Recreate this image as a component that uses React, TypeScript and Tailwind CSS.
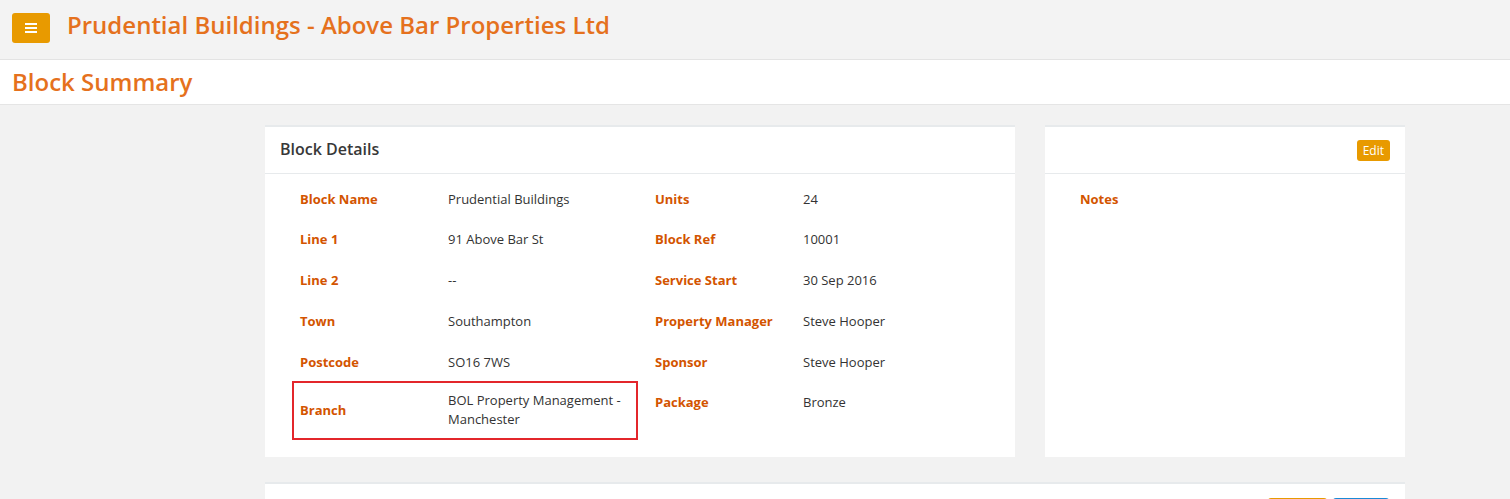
const font = { fontFamily: '"Open Sans", "Liberation Sans", sans-serif' };

interface Field {
  label: string;
  value: string[];
  highlight?: boolean;
}

const leftFields: Field[] = [
  { label: "Block Name", value: ["Prudential Buildings"] },
  { label: "Line 1", value: ["91 Above Bar St"] },
  { label: "Line 2", value: ["--"] },
  { label: "Town", value: ["Southampton"] },
  { label: "Postcode", value: ["SO16 7WS"] },
  { label: "Branch", value: ["BOL Property Management -", "Manchester"], highlight: true },
];

const rightFields: Field[] = [
  { label: "Units", value: ["24"] },
  { label: "Block Ref", value: ["10001"] },
  { label: "Service Start", value: ["30 Sep 2016"] },
  { label: "Property Manager", value: ["Steve Hooper"] },
  { label: "Sponsor", value: ["Steve Hooper"] },
  { label: "Package", value: ["Bronze"] },
];

const FieldRow = ({ field }: { field: Field }) => {
  if (field.highlight) {
    return (
      <div className="-ml-[8px] -mt-[2px] flex w-[346px] items-center border-2 border-[#e3262b] py-[8px] pl-[6px]">
        <div className="w-[148px] shrink-0 font-bold text-[#d35400]">{field.label}</div>
        <div className="text-[#333]">
          {field.value.map((v) => (
            <div key={v}>{v}</div>
          ))}
        </div>
      </div>
    );
  }
  return (
    <div className="flex h-[40.75px] items-center">
      <div className="w-[148px] shrink-0 font-bold text-[#d35400]">{field.label}</div>
      <div className="text-[#333]">{field.value.join(" ")}</div>
    </div>
  );
};

export default function App() {
  return (
    <div style={font} className="min-h-[499px] bg-[#f2f2f2] text-[13px] leading-[19.5px]">
      {/* top bar */}
      <div className="flex h-[60px] items-start border-b border-[#e3e3e3] bg-[#f3f3f3] pl-[12px] pt-[13px]">
        <button
          type="button"
          className="flex h-[30px] w-[38px] items-center justify-center rounded-[3px] bg-[#e89a00]"
          aria-label="Menu"
        >
          <span className="flex flex-col gap-[2px]">
            <span className="block h-[2px] w-[12px] bg-white" />
            <span className="block h-[2px] w-[12px] bg-white" />
            <span className="block h-[2px] w-[12px] bg-white" />
          </span>
        </button>
        <h1 className="ml-[17px] -mt-[3px] text-[24px] font-semibold leading-[30px] text-[#e5711d]">
          Prudential Buildings - Above Bar Properties Ltd
        </h1>
      </div>

      {/* page heading */}
      <div className="flex h-[45px] items-center border-b border-[#e5e5e5] bg-white pl-[12px]">
        <h2 className="text-[24px] font-semibold leading-[30px] text-[#e5711d]">Block Summary</h2>
      </div>

      <div className="ml-[265px] w-[1140px] pt-[20px]">
        <div className="flex gap-[30px]">
          {/* Block details */}
          <div className="w-[750px] border-t-2 border-[#e7eaec] bg-white">
            <div className="flex h-[47px] items-center border-b border-[#e7eaec] px-[15px]">
              <h3 className="text-[16px] font-semibold text-[#383838]">Block Details</h3>
            </div>
            <div className="flex pb-[17px] pl-[35px] pt-[5px]">
              <div className="w-[355px]">
                {leftFields.map((f) => (
                  <FieldRow key={f.label} field={f} />
                ))}
              </div>
              <div className="flex-1">
                {rightFields.map((f) => (
                  <FieldRow key={f.label} field={f} />
                ))}
              </div>
            </div>
          </div>

          {/* Notes */}
          <div className="w-[360px] border-t-2 border-[#e7eaec] bg-white">
            <div className="flex h-[47px] items-center justify-end border-b border-[#e7eaec] px-[15px]">
              <button
                type="button"
                className="h-[21px] rounded-[3px] bg-[#e89a00] px-[6px] text-[12px] leading-[21px] text-white"
              >
                Edit
              </button>
            </div>
            <div className="pl-[35px] pt-[5px]">
              <div className="flex h-[40.75px] items-center font-bold text-[#d35400]">Notes</div>
            </div>
          </div>
        </div>

        {/* next panel */}
        <div className="mt-[25px] border-t-2 border-[#e7eaec] bg-white">
          <div className="flex justify-end gap-[6px] pl-[15px] pr-[16px] pt-[14px]">
            <button type="button" className="h-[30px] w-[59px] rounded-[3px] bg-[#e89a00] text-white" />
            <button type="button" className="h-[30px] w-[56px] rounded-[3px] bg-[#1a8ad6] text-white" />
          </div>
          <div className="h-[40px]" />
        </div>
      </div>
    </div>
  );
}
